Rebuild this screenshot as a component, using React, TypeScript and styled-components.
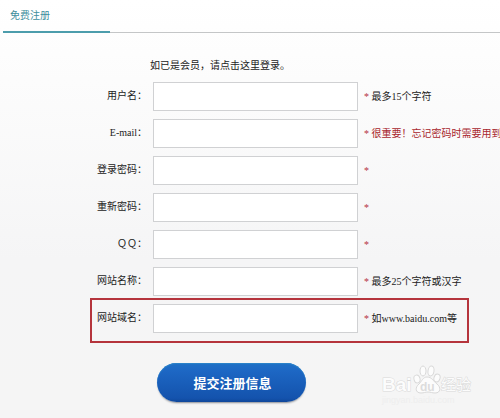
import React from "react";
import styled, { createGlobalStyle } from "styled-components";

const GlobalStyle = createGlobalStyle`
  * { box-sizing: border-box; }
  html { min-height: 100%; background: linear-gradient(#ffffff 0, #fcfcfc 80px, #f5f5f6 260px, #f5f5f5 400px) no-repeat #f5f5f5; }
  body {
    margin: 0;
    overflow-x: hidden;
    color: #222;
    font: 10px/16px "Liberation Serif", "Noto Sans CJK SC", serif;
  }
`;

const Page = styled.main`
  position: relative;
  overflow: hidden;
  padding-bottom: 15px;
`;

const Header = styled.header`
  display: flex;
  margin-left: 3px;
  border-bottom: 1px solid #c4c6c7;
`;

const Title = styled.h1`
  width: 107px;
  height: 33px;
  margin: 0 0 -1px;
  padding: 8px 0 0 7px;
  border-bottom: 2px solid #4c9dac;
  color: #3f8f9d;
  font-size: 10px;
  line-height: 16px;
  font-weight: 400;
`;

const Form = styled.form`
  display: flex;
  flex-direction: column;
  gap: 8px;
  padding-top: 25px;
`;

const Intro = styled.p`
  margin: 0 0 0 150px;
`;

const Row = styled.div<{ $marked?: boolean }>`
  display: grid;
  grid-template-columns: ${(p) => (p.$marked ? "55px" : "147px")} 205px 1fr;
  column-gap: 6px;
  align-items: center;
  white-space: nowrap;
  ${(p) =>
    p.$marked &&
    `
    width: 379px;
    margin: -6px 0 0 90px;
    padding: 4px 0 8px;
    border: 2px solid #b5343c;
  `}
`;

const Label = styled.label`
  padding-bottom: 1px;
  text-align: right;
`;

const Field = styled.input`
  width: 100%;
  height: 29px;
  padding: 0 6px;
  border: 1px solid #d0d1d3;
  border-radius: 0;
  background: #fff;
  font: inherit;
  outline: none;
`;

const Hint = styled.span<{ $strong?: boolean }>`
  color: ${(p) => (p.$strong ? "#a8262d" : "#222")};
`;

const Star = styled.span`
  color: #b5343c;
`;

const Submit = styled.button`
  width: 149px;
  height: 39px;
  margin: 12px 0 0 157px;
  padding: 0 0 0 2px;
  border: 0;
  border-radius: 20px;
  background: linear-gradient(#1e70c6 0, #1d67c4 20%, #1453ad 90%, #0f479b);
  box-shadow: inset 0 1px 1px #2b83c9, 0 2px 2px -1px #8b8e94;
  color: #fff;
  font: 700 13px/20px "Noto Sans CJK SC", sans-serif;
  cursor: pointer;
`;

const Watermark = styled.svg`
  position: absolute;
  right: 20px;
  bottom: 12px;
  width: 104px;
  height: 48px;
`;

const fields = [
  { id: "username", label: "用户名：", hint: "最多15个字符" },
  { id: "email", label: "E-mail：", hint: "很重要！忘记密码时需要用到", strong: true },
  { id: "password", label: "登录密码：", type: "password" },
  { id: "repeat", label: "重新密码：", type: "password" },
  { id: "qq", label: "ＱＱ：" },
  { id: "site", label: "网站名称：", hint: "最多25个字符或汉字" },
  { id: "domain", label: "网站域名：", hint: "如www.baidu.com等", marked: true },
];

export default function App() {
  return (
    <>
      <GlobalStyle />
      <Page>
        <Header>
          <Title>免费注册</Title>
        </Header>
        <Form onSubmit={(e) => e.preventDefault()}>
          <Intro>如已是会员，请点击这里登录。</Intro>
          {fields.map((f) => (
            <Row key={f.id} $marked={f.marked}>
              <Label htmlFor={f.id}>{f.label}</Label>
              <Field id={f.id} name={f.id} type={f.type ?? "text"} />
              <Hint $strong={f.strong}>
                <Star>*</Star> {f.hint}
              </Hint>
            </Row>
          ))}
          <Submit type="submit">提交注册信息</Submit>
        </Form>
        <Watermark viewBox="0 0 104 48" aria-label="Baidu 经验">
          <g fill="#fcfcfc" stroke="#d9d9d9" strokeWidth="1">
            <g paintOrder="stroke">
              <text x="6" y="34" fontFamily="Liberation Sans, sans-serif" fontWeight="700" fontSize="19">Bai</text>
              <text x="65" y="33" fontFamily="Noto Sans CJK SC, sans-serif" fontSize="15">经验</text>
            </g>
            <ellipse cx="41" cy="22" rx="3" ry="4" transform="rotate(-15 41 22)" />
            <ellipse cx="47" cy="14" rx="3" ry="5" />
            <ellipse cx="55" cy="14" rx="3" ry="5" transform="rotate(8 55 14)" />
            <ellipse cx="61" cy="21" rx="3" ry="4" transform="rotate(18 61 21)" />
            <path d="M51 20c-4 0-5 4-8 7-4 3-4 9 2 9 3 0 4-1 7-1s4 1 7 1c6 0 6-6 2-9-4-3-5-7-10-7z" />
          </g>
          <text x="44" y="34" fill="#dcdcdc" fontFamily="Liberation Sans, sans-serif" fontWeight="700" fontSize="12">du</text>
          <text x="6" y="46" fill="#eeeeee" fontFamily="Liberation Sans, sans-serif" fontSize="9">jingyan.baidu.com</text>
        </Watermark>
      </Page>
    </>
  );
}
